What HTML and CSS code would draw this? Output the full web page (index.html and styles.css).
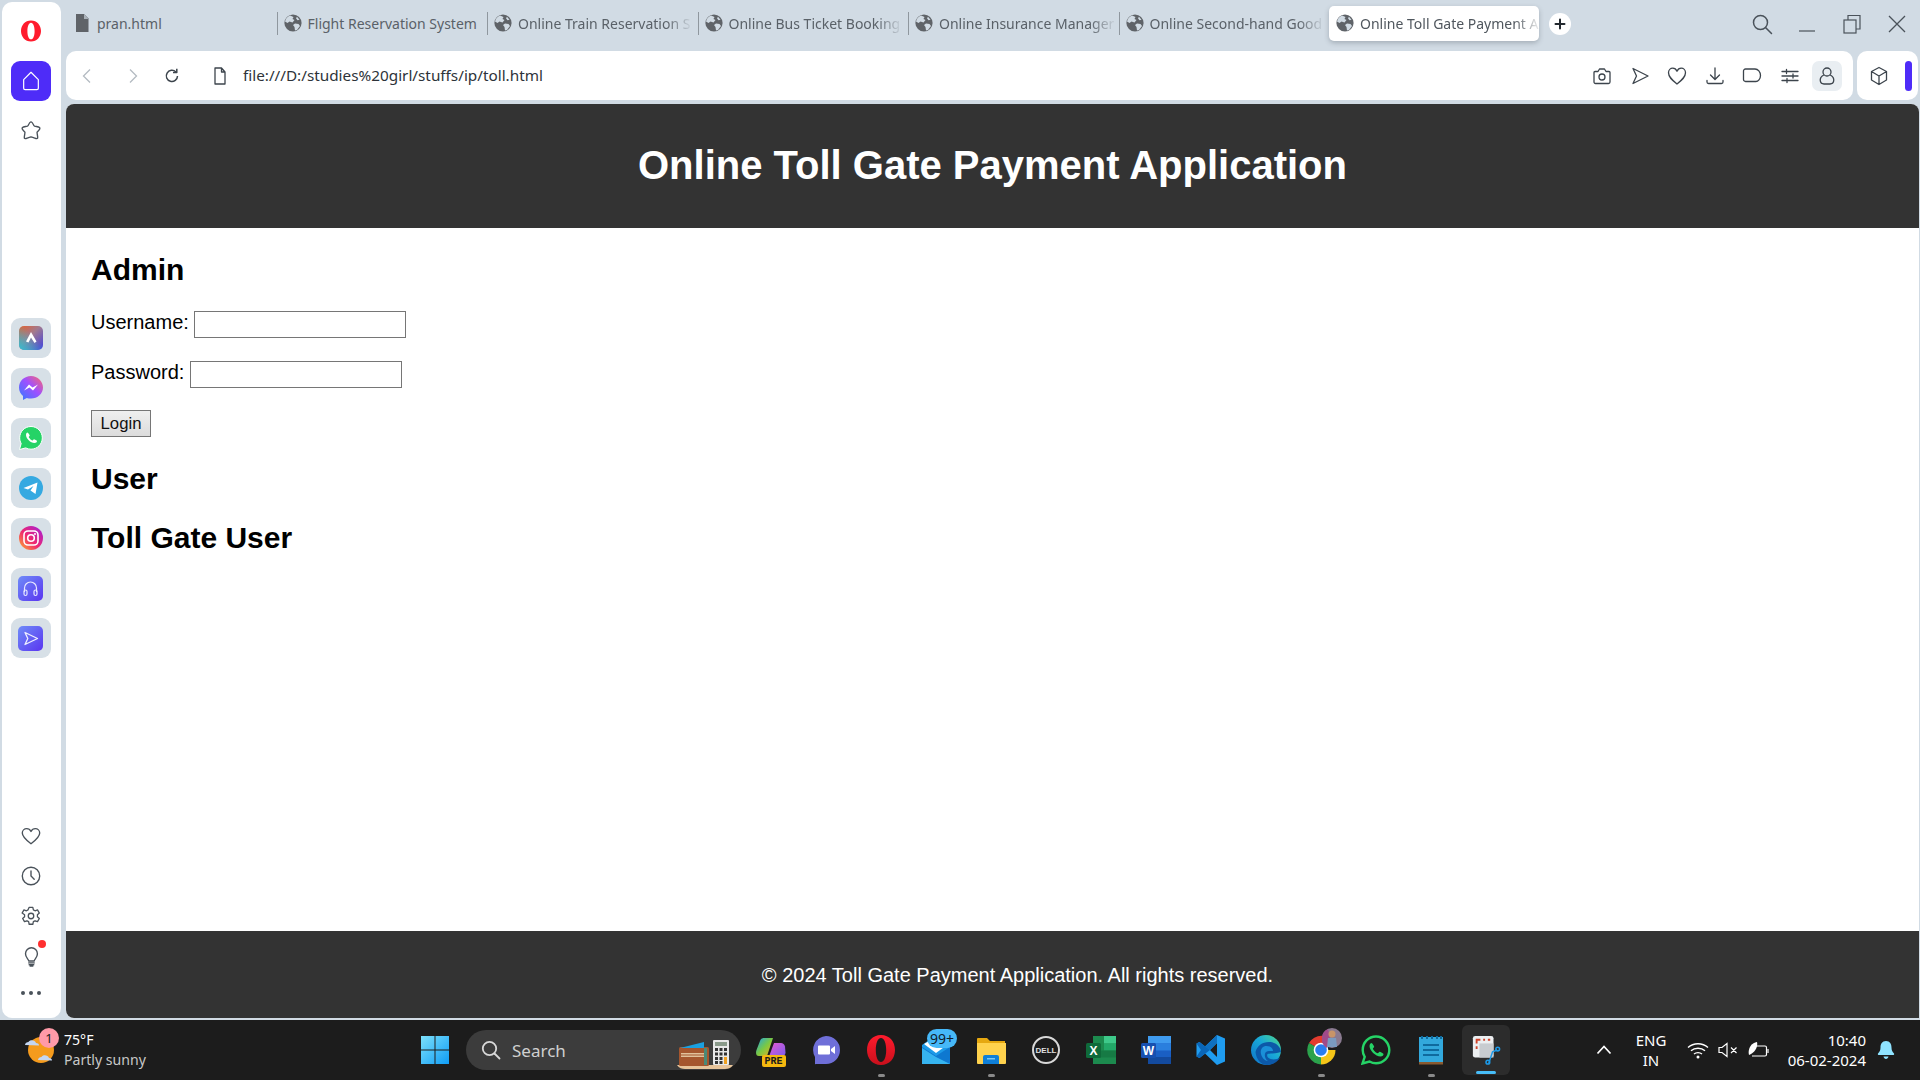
FILE: index.html
```html
<!DOCTYPE html>
<html lang="en">
<head>
<meta charset="utf-8">
<title>Online Toll Gate Payment Application</title>
<link rel="stylesheet" href="styles.css">
</head>
<body>
<svg class="defs" width="0" height="0" aria-hidden="true">
  <defs>
    <symbol id="globe" viewBox="0 0 18 18">
      <circle cx="9" cy="9" r="8.6" fill="#5f6368"/>
      <path d="M6 1.500 9.500 3 8.500 5 10.500 6 8.500 8.500 5.500 7.500 3.500 9 1 7.500C1.500 4.500 3.500 2.500 6 1.500ZM11 9.500l3.500.5 1.500 2-3 4-2 .5-.5-3.500-1.500-2ZM13 2.800l2.500 3-2 .5-1.500-2Z" fill="#d1dbe4"/>
    </symbol>
    <linearGradient id="gAria" x1="0" y1="0" x2="1" y2="1"><stop offset="0" stop-color="#e8602a"/><stop offset=".45" stop-color="#a07a90"/><stop offset="1" stop-color="#3f3ee0"/></linearGradient>
    <linearGradient id="gAria2" x1="0" y1="1" x2=".6" y2=".4"><stop offset="0" stop-color="#30c0d0"/><stop offset="1" stop-color="#30c0d0" stop-opacity="0"/></linearGradient>
    <linearGradient id="gMsg" x1="0" y1="1" x2="1" y2="0"><stop offset="0" stop-color="#2f7bff"/><stop offset=".55" stop-color="#a050ff"/><stop offset="1" stop-color="#ff6a6a"/></linearGradient>
    <linearGradient id="gIg" x1="0" y1="1" x2="1" y2="0"><stop offset="0" stop-color="#fdb32a"/><stop offset=".45" stop-color="#f0286e"/><stop offset="1" stop-color="#a01fe0"/></linearGradient>
    <linearGradient id="gPurple" x1="0" y1="0" x2="1" y2="1"><stop offset="0" stop-color="#6f8cf8"/><stop offset="1" stop-color="#5a35f0"/></linearGradient>
    <linearGradient id="gWin" x1="0" y1="0" x2="1" y2="1"><stop offset="0" stop-color="#7ce0fb"/><stop offset="1" stop-color="#0f9cf5"/></linearGradient>
    <linearGradient id="gOpera" x1="0" y1="0" x2="0" y2="1"><stop offset="0" stop-color="#ff1b2d"/><stop offset="1" stop-color="#c8101c"/></linearGradient>
    <linearGradient id="gEdge" x1="1" y1="0" x2="0" y2="1"><stop offset="0" stop-color="#4fd88a"/><stop offset=".45" stop-color="#18a8d8"/><stop offset="1" stop-color="#0f70c8"/></linearGradient>
    <linearGradient id="gCop" x1="0" y1="0" x2="1" y2="1"><stop offset="0" stop-color="#1ea4e8"/><stop offset=".5" stop-color="#7ac943"/><stop offset="1" stop-color="#f2b01e"/></linearGradient>
    <linearGradient id="gCop2" x1="0" y1="0" x2="1" y2="1"><stop offset="0" stop-color="#e85ad0"/><stop offset="1" stop-color="#7a5cf0"/></linearGradient>
  </defs>
</svg>

<div class="screen">
  <div class="window">
    <aside class="sidebar">
      <div class="side-top">
        <svg class="logo-o" viewBox="0 0 24 24"><path fill="#ff1b2d" fill-rule="evenodd" d="M12 1.500C6 1.500 2 6.200 2 12s4 10.500 10 10.500S22 17.800 22 12 18 1.500 12 1.500Zm0 2.200c2.300 0 3.600 3.700 3.600 8.300s-1.300 8.300-3.600 8.300-3.600-3.700-3.600-8.300 1.300-8.300 3.600-8.300Z"/></svg>
        <div class="home-btn">
          <svg class="ic-22" viewBox="0 0 24 24" fill="none" stroke="#fff" stroke-width="1.300"><path d="M12 2.500 4 10.500V20a1.500 1.500 0 0 0 1.500 1.500h13A1.500 1.500 0 0 0 20 20v-9.500Z" stroke-linejoin="round"/></svg>
        </div>
        <svg class="side-ic star" viewBox="0 0 24 24" fill="none" stroke="#4a525a" stroke-width="1.500" stroke-linejoin="round"><path d="M12 2c1.200 0 1.800 1.200 3.300 4.200.4.800 4.700 1 6 2 1 .9.300 2-2.700 5.100-.3.500 1.100 4.800.6 6.600-.8 1.300-2.200-.1-7.200-1.500-5 1.400-6.400 2.800-7.200 1.500-.5-1.800.9-6.100.6-6.600C2.400 10.200 1.700 9.100 2.700 8.200c1.300-1 5.600-1.200 6-2C10.200 3.200 10.800 2 12 2Z"/></svg>
      </div>

      <div class="side-apps">
        <div class="app-btn"><svg class="ic-24" viewBox="0 0 24 24"><rect width="24" height="24" rx="5" fill="url(#gAria)"/><rect width="24" height="24" rx="5" fill="url(#gAria2)"/><path d="M12 6 7 15.500l2.500 1 2.500-5 3.500 5.500 2-1.500Z" fill="#fff"/></svg></div>
        <div class="app-btn"><svg class="ic-24" viewBox="0 0 24 24"><path d="M12 0C5.300 0 0 5 0 11.500c0 3.500 1.500 6.500 4 8.500v4l3.800-2c1.300.4 2.700.6 4.200.6 6.700 0 12-5 12-11.100S18.700 0 12 0Z" fill="url(#gMsg)"/><path d="m5 14.500 5-6 3.500 3 5.500-3-5 6-3.500-3Z" fill="#fff"/></svg></div>
        <div class="app-btn"><svg class="ic-24" viewBox="0 0 24 24"><path d="M12 .5C5.700.5.700 5.500.7 11.800c0 2 .5 4 1.500 5.700L.5 23.500l6.200-1.600c1.600.9 3.400 1.300 5.300 1.300 6.300 0 11.300-5 11.300-11.300S18.300.5 12 .5Z" fill="#25d366" stroke="#fff" stroke-width="1"/><path d="M8.500 6.500c-.5 0-1.500.8-1.500 2.500 0 3.500 4.500 8 8.500 8 1.500 0 2.500-1 2.500-2 0-.5-2.500-1.800-3-1.800-.5 0-1 1.200-1.500 1.200-1 0-3.500-2.500-3.800-3.500 0-.5 1-1 1-1.500S9 6.500 8.500 6.500Z" fill="#fff"/></svg></div>
        <div class="app-btn"><svg class="ic-24" viewBox="0 0 24 24"><circle cx="12" cy="12" r="12" fill="#35a9e1"/><path d="M4.500 12 18.500 6.500 16.500 18 11.500 14.500 14.500 10 9 13.500Z" fill="#fff"/></svg></div>
        <div class="app-btn"><svg class="ic-24" viewBox="0 0 24 24"><circle cx="12" cy="12" r="12" fill="url(#gIg)"/><rect x="5" y="5" width="14" height="14" rx="4" fill="none" stroke="#fff" stroke-width="1.600"/><circle cx="12" cy="12" r="3.300" fill="none" stroke="#fff" stroke-width="1.600"/><circle cx="16" cy="8" r="1" fill="#fff"/></svg></div>
        <div class="app-btn"><svg class="ic-25" viewBox="0 0 25 25"><rect width="25" height="25" rx="5" fill="url(#gPurple)"/><path d="M6.500 16v-4a6 6 0 0 1 12 0v4" fill="none" stroke="#e8e8ff" stroke-width="1.200"/><rect x="6" y="14" width="3" height="5.500" rx="1.500" fill="none" stroke="#e8e8ff" stroke-width="1.200"/><rect x="16" y="14" width="3" height="5.500" rx="1.500" fill="none" stroke="#e8e8ff" stroke-width="1.200"/></svg></div>
        <div class="app-btn"><svg class="ic-25" viewBox="0 0 25 25"><rect width="25" height="25" rx="5" fill="url(#gPurple)"/><path d="M7 6.500 19.500 12.500 7 18.500 9.800 12.500Z" fill="none" stroke="#f0f0ff" stroke-width="1.300" stroke-linejoin="round"/></svg></div>
      </div>

      <div class="side-bottom">
        <svg class="side-ic" viewBox="0 0 24 24" fill="none" stroke="#4a525a" stroke-width="1.500"><path d="M12 20.500C6 16 2.500 12.800 2.500 8.800 2.500 6 4.700 4 7.300 4c2 0 3.700 1.100 4.700 3 1-1.900 2.700-3 4.700-3 2.600 0 4.800 2 4.800 4.800 0 4-3.500 7.200-9.500 11.700Z" stroke-linejoin="round"/></svg>
        <svg class="side-ic" viewBox="0 0 24 24" fill="none" stroke="#4a525a" stroke-width="1.500"><circle cx="12" cy="12" r="9.500"/><path d="M12 6.500V12l3.500 3.500" stroke-linecap="round"/></svg>
        <svg class="side-ic" viewBox="0 0 24 24" fill="none" stroke="#4a525a" stroke-width="1.400" stroke-linejoin="round"><circle cx="12" cy="12" r="3"/><path d="M10 2.500h4l.6 2.800 1.800 1 2.700-.9 2 3.400-2.100 1.900v2.100l2.100 1.900-2 3.400-2.700-.9-1.800 1-.6 2.800h-4l-.6-2.800-1.800-1-2.700.9-2-3.400 2.100-1.900v-2.100L2.300 8.800l2-3.400 2.700.9 1.800-1Z"/></svg>
        <div class="bulb">
          <svg class="side-ic" viewBox="0 0 24 24" fill="none" stroke="#4a525a" stroke-width="1.500"><path d="M9.500 17.500c0-2-3.500-3.500-3.500-8a6.500 6.500 0 0 1 13 0c0 4.500-3.500 6-3.500 8Z" stroke-linejoin="round"/><path d="M9.500 19.500h6M10 21.500h5M11 23h3" stroke-linecap="round"/></svg>
          <span class="red-dot"></span>
        </div>
        <div class="dots"><span></span><span></span><span></span></div>
      </div>
    </aside>

    <div class="browser">
      <div class="tabstrip">
        <div class="tab">
          <svg class="tab-ic" viewBox="0 0 18 18"><path d="M3 0h8l4.500 4.500V18H3Z" fill="#5f6368"/><path d="M11 0v5h4.500" fill="#aab2b9"/></svg>
          <span class="tab-text">pran.html</span>
        </div>
        <div class="tab sep"><svg class="tab-ic"><use href="#globe"/></svg><span class="tab-text">Flight Reservation System</span></div>
        <div class="tab sep"><svg class="tab-ic"><use href="#globe"/></svg><span class="tab-text fade">Online Train Reservation S</span></div>
        <div class="tab sep"><svg class="tab-ic"><use href="#globe"/></svg><span class="tab-text fade">Online Bus Ticket Booking</span></div>
        <div class="tab sep"><svg class="tab-ic"><use href="#globe"/></svg><span class="tab-text fade">Online Insurance Manager</span></div>
        <div class="tab sep"><svg class="tab-ic"><use href="#globe"/></svg><span class="tab-text fade">Online Second-hand Good</span></div>
        <div class="tab active"><svg class="tab-ic"><use href="#globe"/></svg><span class="tab-text fade">Online Toll Gate Payment A</span></div>
        <div class="new-tab"><svg viewBox="0 0 12 12" class="ic-12"><path d="M6 1.500v9M1.500 6h9" stroke="#22282e" stroke-width="2" stroke-linecap="round"/></svg></div>
        <div class="win-controls">
          <svg class="ic-22" viewBox="0 0 22 22" fill="none" stroke="#4a525a" stroke-width="1.500"><circle cx="9.500" cy="9.500" r="7"/><path d="m14.500 14.500 6 6" stroke-linecap="round"/></svg>
          <svg class="ic-22" viewBox="0 0 22 22" fill="none" stroke="#4a525a" stroke-width="1.200"><path d="M3 18h16"/></svg>
          <svg class="ic-22" viewBox="0 0 22 22" fill="none" stroke="#4a525a" stroke-width="1.200"><rect x="3" y="7" width="12" height="13"/><path d="M7 7V2.500h12V16h-4"/></svg>
          <svg class="ic-22" viewBox="0 0 22 22" fill="none" stroke="#4a525a" stroke-width="1.300"><path d="m3 3 16 16M19 3 3 19"/></svg>
        </div>
      </div>

      <div class="toolrow">
        <div class="addressbar">
          <svg class="nav-ic back" viewBox="0 0 16 16" fill="none" stroke="#b4bbc2" stroke-width="1.300"><path d="M11 1.500 4.500 8l6.500 6.500"/></svg>
          <svg class="nav-ic fwd" viewBox="0 0 16 16" fill="none" stroke="#b4bbc2" stroke-width="1.300"><path d="M5 1.500 11.500 8 5 14.500"/></svg>
          <svg class="nav-ic reload" viewBox="0 0 16 16" fill="none" stroke="#3c444c" stroke-width="1.500"><path d="M13.500 8a5.600 5.600 0 1 1-1.600-4"/><path d="M12.800.8v3.800H9" stroke-linejoin="round"/></svg>
          <svg class="nav-ic doc" viewBox="0 0 16 18" fill="none" stroke="#3c444c" stroke-width="1.300"><path d="M3 1h6.500L13 5v12H3Z M9.500 1v4H13" stroke-linejoin="round"/></svg>
          <span class="url">file:///D:/studies%20girl/stuffs/ip/toll.html</span>
          <div class="tools">
            <svg class="tool-ic" viewBox="0 0 20 20" fill="none" stroke="#3c444c" stroke-width="1.300" stroke-linejoin="round"><path d="M2 6.500a1 1 0 0 1 1-1h3l1.500-2.500h5L14 5.500h3a1 1 0 0 1 1 1V16a1.500 1.500 0 0 1-1.500 1.500h-13A1.500 1.500 0 0 1 2 16Z"/><circle cx="10" cy="11" r="3"/></svg>
            <svg class="tool-ic" viewBox="0 0 20 20" fill="none" stroke="#3c444c" stroke-width="1.300" stroke-linejoin="round"><path d="M3 2.500 18 10 3 17.500 6.500 10Z"/></svg>
            <svg class="tool-ic" viewBox="0 0 20 20" fill="none" stroke="#3c444c" stroke-width="1.300" stroke-linejoin="round"><path d="M10 18C5 14 1.500 11 1.500 6.800 1.500 4 3.500 2.200 5.800 2.200c1.800 0 3.300 1 4.200 3 .9-2 2.400-3 4.200-3 2.300 0 4.300 1.800 4.300 4.600C18.500 11 15 14 10 18Z"/></svg>
            <svg class="tool-ic" viewBox="0 0 20 20" fill="none" stroke="#3c444c" stroke-width="1.300" stroke-linecap="round" stroke-linejoin="round"><path d="M10 2v11M5.500 9 10 13.500 14.500 9M2 14.500V16a1.500 1.500 0 0 0 1.500 1.500h13A1.500 1.500 0 0 0 18 16v-1.500"/></svg>
            <svg class="tool-ic" viewBox="0 0 20 20" fill="none" stroke="#3c444c" stroke-width="1.300" stroke-linejoin="round"><path d="M1.500 5a2 2 0 0 1 2-2H13c3 0 5.500 3 5.500 6.500S16 15.500 14 15.500H3.500a2 2 0 0 1-2-2Z"/></svg>
            <svg class="tool-ic" viewBox="0 0 20 20" fill="none" stroke="#3c444c" stroke-width="1.300" stroke-linecap="round"><path d="M2 5.500h16M2 10h16M2 14.500h16M6.500 3.500v4M13 8v4M7 12.500v4"/></svg>
            <div class="profile"><svg class="tool-ic" viewBox="0 0 20 20" fill="none" stroke="#3c444c" stroke-width="1.300"><circle cx="10" cy="6" r="4"/><path d="M6.800 9C3.800 10.500 3 13 3.300 15c.3 2 2 3 3.700 3h6c1.700 0 3.400-1 3.700-3 .3-2-.5-4.500-3.500-6"/></svg></div>
          </div>
        </div>
        <div class="extbox">
          <svg class="tool-ic" viewBox="0 0 20 20" fill="none" stroke="#3c444c" stroke-width="1.300" stroke-linejoin="round"><path d="M10 1.500 17.500 5.500V14L10 18.500 2.500 14V5.500ZM2.500 5.500 10 10l7.500-4.500M10 10v8.500"/></svg>
          <span class="ext-bar"></span>
        </div>
      </div>

      <main class="page">
        <header class="page-head"><h1>Online Toll Gate Payment Application</h1></header>
        <section class="page-body">
          <h2 class="h-admin">Admin</h2>
          <form class="login">
            <div class="field"><label>Username:</label><span class="input"></span></div>
            <div class="field"><label>Password:</label><span class="input"></span></div>
            <button class="btn" type="button">Login</button>
          </form>
          <h2 class="h-user">User</h2>
          <h2 class="h-toll">Toll Gate User</h2>
        </section>
        <footer class="page-foot">© 2024 Toll Gate Payment Application. All rights reserved.</footer>
      </main>
    </div>
  </div>

  <div class="taskbar">
    <div class="weather">
      <div class="wx-ic">
        <svg class="ic-34" viewBox="0 0 34 34"><circle cx="17" cy="17" r="13" fill="#f59b1d"/><path d="M1 12c0-2 2-3 3.500-3C5.500 6.500 11 6.500 12 10c2 0 3 1 3 2.500Z" fill="#c4d6f2"/><path d="M14 27c0-2 2-3 3.500-3 1-2.500 6.500-2.500 7.500 1 2 0 3 1 3 2.500Z" fill="#c4d6f2"/></svg>
        <span class="wx-badge">1</span>
      </div>
      <div class="wx-text"><span class="wx-temp">75°F</span><span class="wx-desc">Partly sunny</span></div>
    </div>

    <div class="tb-center">
      <div class="tb-win"><svg class="ic-30" viewBox="0 0 30 30"><path fill="url(#gWin)" d="M1 1h13.500v13.500H1zM15.500 1H29v13.500H15.500zM1 15.500h13.500V29H1zM15.500 15.500H29V29H15.500z"/></svg></div>
      <div class="tb-search">
        <svg class="ic-20" viewBox="0 0 20 20" fill="none" stroke="#d8d8d8" stroke-width="1.800"><circle cx="8.500" cy="8.500" r="6.700"/><path d="m13.500 13.500 5 5" stroke-linecap="round"/></svg>
        <span class="search-label">Search</span>
        <svg class="search-art" viewBox="0 0 56 30"><path d="M0 26h56c-2 3-5 4-8 4H8c-3 0-6-1-8-4Z" fill="#e8c49a"/><rect x="2" y="8" width="30" height="19" rx="1.500" fill="#a5562e"/><path d="M3 9 27 3v6Z" fill="#1aa0e0"/><path d="M4 14h24v1.500H4zM4 16.500h24V18H4z" fill="#e0c09a"/><rect x="27" y="9" width="3" height="17" fill="#4a8a78"/><rect x="36" y="1" width="16" height="25" rx="1" fill="#e8e8e8"/><rect x="38" y="3" width="12" height="4" fill="#8a9a8a"/><path d="M38 9h3v3h-3zM42.500 9h3v3h-3zM47 9h3v3h-3zM38 13.500h3v3h-3zM42.500 13.500h3v3h-3zM47 13.500h3v3h-3zM38 18h3v3h-3zM42.500 18h3v3h-3zM38 22h3v3h-3zM42.500 22h3v3h-3z" fill="#333"/><rect x="47" y="18" width="3" height="7" fill="#f0a020"/></svg>
      </div>
      <div class="tb-apps">
        <div class="tb-app">
          <svg class="ic-30" viewBox="0 0 30 30"><path d="M8 3h9l-6 18H3C0 21-.5 18 .5 15L4 6c.5-2 2-3 4-3Z" fill="url(#gCop)"/><path d="M18 8h7c2 0 3.500 1.500 4 3.500l.5 6c0 2-1.500 4-4 4H13Z" fill="url(#gCop2)"/></svg>
          <span class="pre">PRE</span>
        </div>
        <div class="tb-app"><svg class="ic-30" viewBox="0 0 30 30"><path d="M15 1a14 14 0 0 1 0 28H4.500l-.5.500V22A14 14 0 0 1 15 1Z" fill="#6f6fd8"/><path d="M8 10.500h10a1 1 0 0 1 1 1v7a1 1 0 0 1-1 1H8a1 1 0 0 1-1-1v-7a1 1 0 0 1 1-1ZM20 14l4-3v8l-4-3Z" fill="#fff"/></svg></div>
        <div class="tb-app running"><svg class="ic-30" viewBox="0 0 30 30"><path fill="url(#gOpera)" fill-rule="evenodd" d="M15 0C6.500 0 1 6.500 1 15s5.500 15 14 15 14-6.500 14-15S23.500 0 15 0Zm0 3c3.300 0 5.200 5.500 5.200 12S18.300 27 15 27 9.800 21.500 9.800 15 11.700 3 15 3Z"/></svg></div>
        <div class="tb-app mail">
          <svg class="ic-30" viewBox="0 0 30 30"><path d="M1 10 15 0l14 10v19H1Z" fill="#1c9ae8"/><path d="M3 9 15 2l11 8-11 8Z" fill="#fff"/><path d="M1 12 15 21 29 12v17H1Z" fill="#0e78d0"/><path d="M1 29V13l14 9 14 7Z" fill="#36b4f0"/></svg>
          <span class="mail-badge">99+</span>
        </div>
        <div class="tb-app running"><svg class="ic-30" viewBox="0 0 30 30"><path d="M1 4a1 1 0 0 1 1-1h9l3 3h15v22H1Z" fill="#e6a810"/><path d="M1 8h29v20a1 1 0 0 1-1 1H2a1 1 0 0 1-1-1Z" fill="#ffd24d"/><path d="M7 22a2 2 0 0 1 2-2h12a2 2 0 0 1 2 2v7H7Z" fill="#0f7fd8"/><rect x="11" y="23" width="8" height="1.500" fill="#7cc8f4"/></svg></div>
        <div class="tb-app"><div class="dell">DELL</div></div>
        <div class="tb-app"><svg class="ic-30" viewBox="0 0 30 30"><rect x="7" y="1" width="23" height="28" fill="#1c8a4e"/><rect x="18" y="1" width="12" height="7.500" fill="#3ec98a"/><rect x="18" y="8.500" width="12" height="7" fill="#22a868"/><rect x="7" y="15.500" width="23" height="7" fill="#167a44"/><rect y="8" width="15" height="15" rx="1.500" fill="#0f6a3a"/><text x="7.500" y="20" class="tile-letter">X</text></svg></div>
        <div class="tb-app"><svg class="ic-30" viewBox="0 0 30 30"><rect x="7" y="1" width="23" height="28" fill="#1a5fc4"/><rect x="7" y="1" width="23" height="7.500" fill="#3f9bef"/><rect x="7" y="8.500" width="23" height="7" fill="#2a7fde"/><rect x="7" y="22" width="23" height="7" fill="#134a9e"/><rect y="8" width="15" height="15" rx="1.500" fill="#1750b0"/><text x="7.500" y="20" class="tile-letter">W</text></svg></div>
        <div class="tb-app"><svg class="ic-30" viewBox="0 0 30 30"><path d="M21 0 29 3.500v23L21 30 9 18.500 3.500 23 .5 21.500V8.500L3.500 7 9 11.500Zm0 8L14 15l7 7Z" fill="#1f9cf0" fill-rule="evenodd"/><path d="M21 0v8L14 15l-5-3.500Z" fill="#0f70c0"/><path d="M.5 8.500 3.500 7 14 15 3.500 23 .5 21.500 5 15Z" fill="#0a66b8"/></svg></div>
        <div class="tb-app"><svg class="ic-30" viewBox="0 0 30 30"><circle cx="15" cy="15" r="15" fill="url(#gEdge)"/><path d="M30 17c-.5-6-6-10-12-10C11 7 6 11 4.500 17 5 24 10 30 16 30c6 0 11-3 13.500-8-3 2.500-7 3-10 2-3-1-4-3-3-5 2-1 8 0 13.500-2Z" fill="#0c58a8"/><path d="M22 16c0-3-3-5-6.500-5C11 11 9 15 10 19c1 4 4 7 7 7-3-2-4-6-2.500-8.500 1.500-2 5-1.500 7.500-1.500Z" fill="#1a90d8"/></svg></div>
        <div class="tb-app running chrome">
          <svg class="ic-30" viewBox="0 0 30 30"><path d="M15 15 3 8A14.500 14.500 0 0 1 28 8H15Z" fill="#e33b2e"/><path d="M15 15H29.500A14.500 14.500 0 0 1 15 29.500Z" fill="#f5c518"/><path d="M15 15V29.500A14.500 14.500 0 0 1 3 8Z" fill="#2ba24c"/><circle cx="15" cy="15" r="7.300" fill="#fff"/><circle cx="15" cy="15" r="5.800" fill="#2a7df0"/></svg>
          <svg class="avatar" viewBox="0 0 20 20"><circle cx="10" cy="10" r="10" fill="#8a7a90"/><path d="M0 10a10 10 0 0 1 6-9l2 8-3 11a10 10 0 0 1-5-10Z" fill="#a04a8a"/><circle cx="10" cy="6" r="3.500" fill="#c89468"/><path d="M6 10h8l1 9H5Z" fill="#7a9ac0"/></svg>
        </div>
        <div class="tb-app"><svg class="ic-30" viewBox="0 0 30 30"><path d="M15 1.500C7.500 1.500 1.700 7.500 1.700 15c0 2.500.7 4.800 2 6.800L1.500 28.500l7-2c2 1.100 4.200 1.700 6.500 1.700 7.500 0 13.300-6 13.300-13.200S22.500 1.500 15 1.500Z" fill="none" stroke="#25d366" stroke-width="2.400"/><path d="M10.500 8c-.7 0-2 1-2 3 0 4.500 6 10.500 11 10.500 2 0 3-1.300 3-2.500 0-.7-3.300-2.300-3.900-2.300-.6 0-1.200 1.500-1.900 1.500-1.300 0-4.500-3.200-4.800-4.500 0-.6 1.300-1.300 1.300-1.900S11.200 8 10.500 8Z" fill="#25d366"/></svg></div>
        <div class="tb-app running"><svg class="ic-30" viewBox="0 0 30 30"><rect x="3" y="2" width="24" height="27" fill="#32a8dc"/><rect x="3" y="27" width="24" height="2.500" fill="#8a5a30"/><path d="M7 9h16v2H7zM7 14h16v2H7zM7 19h16v2H7z" fill="#0f6a9e"/><path d="M5 1h2v3H5zM10 1h2v3h-2zM15 1h2v3h-2zM20 1h2v3h-2zM24 1h2v3h-2z" fill="#0f6a9e"/></svg></div>
        <div class="tb-app snip">
          <svg class="ic-30" viewBox="0 0 30 32"><rect x="1" y="1" width="22" height="23" rx="2.500" fill="#eceff1"/><path d="M5 9V5h4M12 5h2M17 5h1.500v1M5 12v3" fill="none" stroke="#d0432a" stroke-width="2"/><rect x="8" y="9" width="15" height="15" fill="#c8ccd0"/><path d="M18 30 22 18 27 16" fill="none" stroke="#1c9ae8" stroke-width="1.600"/><circle cx="17" cy="29" r="2" fill="none" stroke="#1c9ae8" stroke-width="1.600"/><circle cx="27.500" cy="15" r="2" fill="none" stroke="#1c9ae8" stroke-width="1.600"/></svg>
        </div>
      </div>
    </div>

    <div class="tray">
      <svg class="tray-chev" viewBox="0 0 16 10" fill="none" stroke="#fff" stroke-width="1.700"><path d="m1.500 8.500 6.500-7 6.500 7"/></svg>
      <div class="lang"><span>ENG</span><span>IN</span></div>
      <svg class="tray-ic wifi" viewBox="0 0 22 18" fill="none" stroke="#fff" stroke-width="1.400"><path d="M1 6.500c5.500-5 14.500-5 20 0M4 9.800c3.800-3.400 10.200-3.400 14 0M7 13c2.200-1.800 5.800-1.800 8 0"/><circle cx="11" cy="16" r="1.500" fill="#fff" stroke="none"/></svg>
      <svg class="tray-ic mute" viewBox="0 0 20 18" fill="none" stroke="#fff" stroke-width="1.200"><path d="M1 6.500h3L9 2.500v13L4 11.500H1ZM13 6.500l5.500 5.500M18.500 6.500 13 12"/></svg>
      <svg class="tray-ic batt" viewBox="0 0 22 18" fill="none" stroke="#fff" stroke-width="1.200"><path d="M7 5h10a1.500 1.500 0 0 1 1.500 1.500v7A1.500 1.500 0 0 1 17 15H4"/><path d="M20 8v4"/><path d="M1 14C-.5 8 3 2 9 1c1 4-1 10-8 13Z" fill="#fff" stroke="none"/></svg>
      <div class="clock"><span>10:40</span><span>06-02-2024</span></div>
      <svg class="tray-ic bell" viewBox="0 0 18 20"><path d="M9 1C5 1 3.500 4 3.500 7.500c0 3-1 4.500-2.500 6-.5.800 0 1.500 1 1.500h14c1 0 1.500-.7 1-1.500-1.500-1.500-2.500-3-2.500-6C14.500 4 13 1 9 1ZM6.500 16.500c.3 1.500 1.300 2.500 2.500 2.500s2.200-1 2.500-2.500Z" fill="#8fe3ff"/></svg>
    </div>
  </div>
</div>
</body>
</html>
```
FILE: styles.css
```css
* { box-sizing: border-box; }
html, body { margin: 0; padding: 0; }
body { font-family: "Liberation Sans", Arial, sans-serif; overflow: hidden; background: #1c1c1c; }
.defs { position: absolute; }
.screen { width: 1920px; height: 1080px; display: flex; flex-direction: column; }

.window { height: 1020px; background: #d1dbe4; display: flex; padding: 2px 0 2px 2px; gap: 5px; }

/* generic icon sizes */
.ic-12 { width: 12px; height: 12px; display: block; }
.ic-20 { width: 20px; height: 20px; display: block; flex: none; }
.ic-22 { width: 22px; height: 22px; display: block; flex: none; }
.ic-24 { width: 24px; height: 24px; display: block; }
.ic-25 { width: 25px; height: 25px; display: block; }
.ic-30 { width: 30px; height: 30px; display: block; }
.ic-34 { width: 34px; height: 34px; display: block; }

/* sidebar */
.sidebar { width: 59px; padding-right: 2px; background: #fff; border-radius: 10px; display: flex; flex-direction: column; align-items: center; flex: none; }
.side-top { display: flex; flex-direction: column; align-items: center; padding-top: 17px; }
.logo-o { width: 24px; height: 24px; display: block; }
.home-btn { width: 40px; height: 40px; margin-top: 18px; background: #4e2cf8; border-radius: 9px; display: flex; align-items: center; justify-content: center; }
.side-ic { width: 22px; height: 22px; display: block; }
.star { margin-top: 19px; }
.side-apps { display: flex; flex-direction: column; gap: 10px; margin-top: 176px; }
.app-btn { width: 40px; height: 40px; background: #d7e0e7; border-radius: 9px; display: flex; align-items: center; justify-content: center; }
.side-bottom { margin-top: auto; padding-bottom: 22px; display: flex; flex-direction: column; align-items: center; gap: 18px; }
.bulb { position: relative; }
.red-dot { position: absolute; top: -5px; right: -4px; width: 8px; height: 8px; border-radius: 50%; background: #ff2f2f; box-shadow: 0 0 0 1px #fff; }
.dots { display: flex; gap: 4px; height: 6px; align-items: center; margin-top: 5px; }
.dots span { width: 4px; height: 4px; border-radius: 50%; background: #4a525a; }

/* browser */
.browser { flex: 1; min-width: 0; display: flex; flex-direction: column; }
.tabstrip { height: 49px; padding-top: 4px; display: flex; align-items: flex-start; }
.tab { width: 210.5px; height: 35px; display: flex; align-items: center; gap: 6px; padding: 0 6px 1px 7px; position: relative; color: #5a6168; font: 14px "Noto Sans", sans-serif; flex: none; }
.tab.sep::before { content: ""; position: absolute; left: 0; top: 6px; width: 1px; height: 23px; background: #8f979e; }
.tab.active { background: #fff; border-radius: 5px; box-shadow: 0 2px 5px rgba(60, 70, 80, .3); width: 210px; color: #50575e; }
.tab-ic { width: 18px; height: 18px; flex: none; }
.tab-text { white-space: nowrap; flex: none; }
.tab-text.fade { -webkit-mask-image: linear-gradient(90deg, #000 86%, rgba(0, 0, 0, .1) 100%); mask-image: linear-gradient(90deg, #000 86%, rgba(0, 0, 0, .1) 100%); }
.new-tab { width: 22px; height: 22px; border-radius: 50%; background: #fff; margin: 7px 0 0 10px; display: flex; align-items: center; justify-content: center; flex: none; }
.win-controls { margin-left: auto; padding: 7px 12px 0 0; display: flex; gap: 23px; }

.toolrow { height: 49px; display: flex; gap: 4px; padding-right: 2px; }
.addressbar { flex: 1; min-width: 0; background: #fff; border-radius: 10px; display: flex; align-items: center; padding-left: 13px; }
.nav-ic { width: 16px; height: 16px; display: block; flex: none; }
.fwd { margin-left: 30px; }
.reload { margin-left: 23px; }
.nav-ic.doc { margin-left: 32px; height: 18px; }
.url { margin-left: 15px; font: 15.3px "Noto Sans", sans-serif; color: #2d3339; white-space: nowrap; padding-bottom: 2px; }
.tools { margin-left: auto; display: flex; align-items: center; gap: 17.500px; padding-right: 11px; }
.tool-ic { width: 20px; height: 20px; display: block; flex: none; }
.profile { width: 30px; height: 30px; margin-left: -5px; background: #e9eef2; border-radius: 7px; display: flex; align-items: center; justify-content: center; }
.extbox { width: 61px; flex: none; background: #fff; border-radius: 10px; display: flex; align-items: center; padding-left: 12px; gap: 16px; }
.ext-bar { width: 7px; height: 30px; border-radius: 4px; background: #4e2cf8; }

/* page */
.page { margin-top: 4px; flex: 1; min-height: 0; background: #fff; border-radius: 8px 8px 0 8px; overflow: hidden; display: flex; flex-direction: column; margin-right: 1px; }
.page-head { background: #333; color: #fff; height: 124px; padding-bottom: 2px; display: flex; align-items: center; justify-content: center; flex: none; }
.page-head h1 { margin: 0; font-size: 40px; font-weight: 700; }
.page-body { flex: 1; padding: 0 25px; color: #000; }
.page-body h2 { font-size: 30px; font-weight: 700; margin: 0; }
.h-admin { padding-top: 25px; }
.login { margin-top: 24px; display: flex; flex-direction: column; align-items: flex-start; }
.field { display: flex; align-items: center; height: 27px; gap: 5.500px; margin-bottom: 23px; font-size: 20px; }
.field + .field { margin-bottom: 22px; }
.field label { padding-bottom: 4px; }
.input { width: 212px; height: 27px; border: 1px solid #767676; background: #fff; display: block; }
.btn { width: 60px; height: 27px; border: 1px solid #767676; background: linear-gradient(#efefef, #dcdcdc); font: 16.700px "Liberation Sans", sans-serif; color: #111; padding: 0; }
.page-body .h-user { margin-top: 25px; }
.page-body .h-toll { margin-top: 25px; }
.page-foot { height: 87px; background: #333; color: #fff; font-size: 20px; display: flex; align-items: center; justify-content: center; padding: 2px 0 0 50px; flex: none; }

/* taskbar */
.taskbar { height: 60px; background: #1c1c1c; display: flex; align-items: center; font-family: "Noto Sans", sans-serif; color: #fff; position: relative; }
.weather { display: flex; align-items: center; width: 420px; padding-left: 24px; gap: 6px; flex: none; }
.wx-ic { position: relative; width: 34px; height: 34px; }
.wx-badge { position: absolute; top: -5px; right: -1px; width: 20px; height: 20px; border-radius: 50%; background: #ff9aa8; color: #1c1c1c; font-size: 13px; line-height: 20px; text-align: center; }
.wx-text { display: flex; flex-direction: column; font-size: 14.100px; line-height: 20px; padding-bottom: 1px; }
.wx-desc { color: #c8c8c8; }
.tb-center { display: flex; align-items: center; flex: none; }
.tb-win { width: 30px; flex: none; }
.tb-search { width: 275px; height: 40px; margin-left: 16px; background: #3c3c3c; border-radius: 20px; display: flex; align-items: center; padding: 0 0 0 15px; position: relative; }
.search-label { margin-left: 11px; font-size: 17px; color: #d0d0d0; }
.search-art { position: absolute; right: 8px; top: 9px; width: 56px; height: 30px; }
.tb-apps { display: flex; margin-left: 2.500px; }
.tb-app { width: 55px; height: 50px; display: flex; align-items: center; justify-content: center; position: relative; flex: none; }
.tb-app.running::after { content: ""; position: absolute; left: 24px; bottom: -2px; width: 7px; height: 3px; border-radius: 2px; background: #8a8a8a; }
.tb-app.snip { background: #2c2c2c; border-radius: 6px; width: 48px; margin-left: 3.500px; }
.tb-app.snip::after { content: ""; position: absolute; left: 14px; bottom: 1px; width: 20px; height: 3px; border-radius: 2px; background: #47bdf8; }
.pre { position: absolute; left: 18px; top: 30px; background: #f5b80f; color: #1c1c1c; font: 700 10px "Liberation Mono", monospace; padding: 1px 3px 0; border-radius: 2px; line-height: 11px; }
.mail-badge { position: absolute; left: 18.500px; top: 4px; width: 30px; height: 19px; text-align: center; background: #46b8f8; color: #10202c; border-radius: 10px; font-size: 14px; line-height: 19px; }
.dell { width: 28px; height: 28px; border: 2px solid #d8d8d8; border-radius: 50%; font: 700 8px "Liberation Sans", sans-serif; color: #e0e0e0; display: flex; align-items: center; justify-content: center; }
.tile-letter { font: 700 12px "Liberation Sans", sans-serif; fill: #fff; text-anchor: middle; }
.avatar { position: absolute; left: 28.500px; top: 3px; width: 20px; height: 20px; }

.tray { margin-left: auto; display: flex; align-items: center; padding-right: 25px; flex: none; }
.tray-chev { width: 16px; height: 10px; display: block; margin-right: 21.500px; }
.lang { display: flex; flex-direction: column; align-items: center; font-size: 15px; line-height: 20px; width: 36px; margin-right: 18px; }
.tray-ic { width: 22px; height: 18px; display: block; }
.mute { margin-left: 8px; }
.batt { margin-left: 9px; }
.clock { display: flex; flex-direction: column; align-items: flex-end; font-size: 15px; line-height: 20px; width: 90px; margin-left: 6px; }
.bell { margin-left: 11px; width: 18px; height: 20px; }
```
